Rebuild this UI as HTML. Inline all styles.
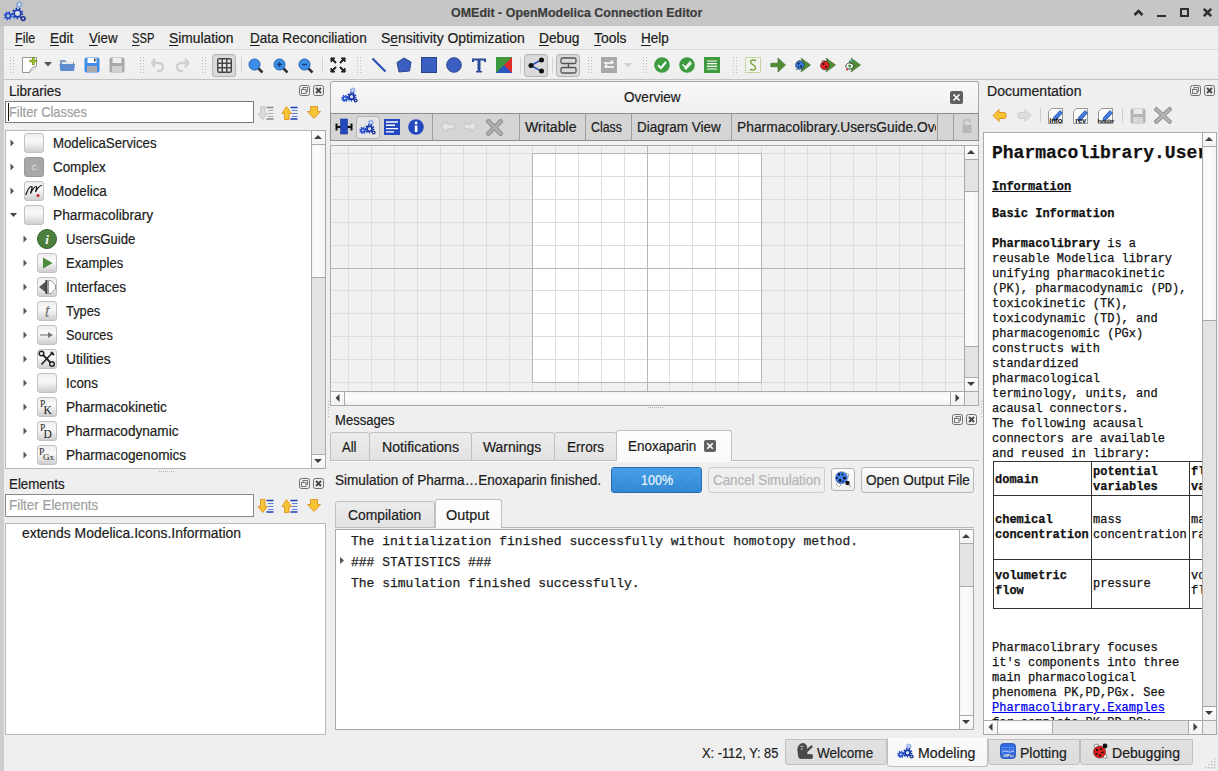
<!DOCTYPE html>
<html><head><meta charset="utf-8"><style>
*{margin:0;padding:0;box-sizing:border-box}
html,body{width:1219px;height:771px;overflow:hidden}
body{background:#efefef;font-family:"Liberation Sans",sans-serif;font-size:13.3px;color:#1c1c1c;position:relative}
.a{position:absolute}
.t{position:absolute;white-space:nowrap;-webkit-text-stroke:0.2px currentColor}
.m{font-family:"Liberation Mono",monospace;-webkit-text-stroke:0.25px currentColor}
.u{text-decoration:underline;text-underline-offset:2px}
</style></head><body>
<div class="a" style="left:0px;top:0px;width:1219px;height:26px;background:#c6c6c6"></div>
<div class="a" style="left:0px;top:26px;width:4px;height:745px;background:#cdcdcd"></div>
<div class="t " style="left:451.30px;top:3px;font-size:12.6px;line-height:20px;transform:scaleX(0.9895);transform-origin:0.00px 0;color:#3d3d3d;font-weight:bold;">OMEdit - OpenModelica Connection Editor</div>
<svg class="a" style="left:0px;top:0px;" width="32" height="26" viewBox="0 0 32 26"><g transform="scale(1)"><path d="M11 13 L17 17 L14 20 Z" fill="#8ab0e8"/><circle cx="19.2" cy="4.6" r="2.45" fill="#7a9ee6"/><circle cx="19.2" cy="4.6" r="2.79" fill="none" stroke="#7a9ee6" stroke-width="1.22" stroke-dasharray="1.09 1.09"/><circle cx="19.2" cy="4.6" r="1.3" fill="#c6c6c6"/><circle cx="19.2" cy="4.6" r="1.3" fill="#e4e8f4"/><circle cx="8.1" cy="15.8" r="3.24" fill="#2450d0"/><circle cx="8.1" cy="15.8" r="3.69" fill="none" stroke="#2450d0" stroke-width="1.62" stroke-dasharray="1.45 1.45"/><circle cx="8.1" cy="15.8" r="1.5" fill="#c6c6c6"/><circle cx="17.5" cy="13.4" r="4.18" fill="#1a3cb0"/><circle cx="17.5" cy="13.4" r="4.76" fill="none" stroke="#1a3cb0" stroke-width="2.09" stroke-dasharray="1.66 1.66"/><circle cx="17.5" cy="13.4" r="2.4" fill="#c6c6c6"/><circle cx="17.5" cy="13.4" r="2.40" fill="#d8dcec"/><circle cx="23.2" cy="18.6" r="1.9" fill="none" stroke="#1a2e90" stroke-width="1.50"/></g></svg>
<svg class="a" style="left:1133px;top:8px;" width="11" height="9" viewBox="0 0 11 9"><path d="M1.5 7 L5.5 3 L9.5 7" fill="none" stroke="#2e2e2e" stroke-width="2.6"/></svg>
<div class="a" style="left:1157px;top:15px;width:9px;height:2px;background:#2e2e2e"></div>
<div class="a" style="left:1180px;top:8px;width:9px;height:9px;border:2px solid #2e2e2e"></div>
<svg class="a" style="left:1202px;top:7px;" width="11" height="11" viewBox="0 0 11 11"><path d="M1.8 1.8 L9.2 9.2 M9.2 1.8 L1.8 9.2" stroke="#2e2e2e" stroke-width="2.5"/></svg>
<div class="t " style="left:15.30px;top:29px;font-size:13.8px;line-height:20px;transform:scaleX(0.9047);transform-origin:0.00px 0;"><span class="u">F</span>ile</div>
<div class="t " style="left:50.20px;top:29px;font-size:13.8px;line-height:20px;transform:scaleX(0.9746);transform-origin:0.00px 0;"><span class="u">E</span>dit</div>
<div class="t " style="left:88.70px;top:29px;font-size:13.8px;line-height:20px;transform:scaleX(0.9606);transform-origin:0.00px 0;"><span class="u">V</span>iew</div>
<div class="t " style="left:131.90px;top:29px;font-size:13.8px;line-height:20px;transform:scaleX(0.8116);transform-origin:0.00px 0;"><span class="u">S</span>SP</div>
<div class="t " style="left:169.30px;top:29px;font-size:13.8px;line-height:20px;transform:scaleX(1.0008);transform-origin:0.00px 0;"><span class="u">S</span>imulation</div>
<div class="t " style="left:249.70px;top:29px;font-size:13.8px;line-height:20px;transform:scaleX(0.9816);transform-origin:0.00px 0;"><span class="u">D</span>ata Reconciliation</div>
<div class="t " style="left:380.80px;top:29px;font-size:13.8px;line-height:20px;transform:scaleX(1.0076);transform-origin:0.00px 0;">S<span class="u">e</span>nsitivity Optimization</div>
<div class="t " style="left:538.90px;top:29px;font-size:13.8px;line-height:20px;transform:scaleX(0.9965);transform-origin:0.00px 0;"><span class="u">D</span>ebug</div>
<div class="t " style="left:593.80px;top:29px;font-size:13.8px;line-height:20px;transform:scaleX(1.0086);transform-origin:0.00px 0;"><span class="u">T</span>ools</div>
<div class="t " style="left:640.70px;top:29px;font-size:13.8px;line-height:20px;transform:scaleX(0.9803);transform-origin:0.00px 0;"><span class="u">H</span>elp</div>
<div class="a" style="left:4px;top:49px;width:1215px;height:1px;background:#dcdcdc"></div>
<div class="a" style="left:4px;top:50px;width:1215px;height:29px;background:linear-gradient(#f3f3f3,#eeeeee)"></div>
<div class="a" style="left:4px;top:79px;width:1215px;height:1px;background:#c2c2c2"></div>
<svg class="a" style="left:10px;top:57px;" width="4" height="16" viewBox="0 0 4 16"><rect x="0" y="0" width="1" height="1" fill="#bdbdbd"/><rect x="0" y="3" width="1" height="1" fill="#bdbdbd"/><rect x="0" y="6" width="1" height="1" fill="#bdbdbd"/><rect x="0" y="9" width="1" height="1" fill="#bdbdbd"/><rect x="0" y="12" width="1" height="1" fill="#bdbdbd"/><rect x="0" y="15" width="1" height="1" fill="#bdbdbd"/><rect x="3" y="0" width="1" height="1" fill="#bdbdbd"/><rect x="3" y="3" width="1" height="1" fill="#bdbdbd"/><rect x="3" y="6" width="1" height="1" fill="#bdbdbd"/><rect x="3" y="9" width="1" height="1" fill="#bdbdbd"/><rect x="3" y="12" width="1" height="1" fill="#bdbdbd"/><rect x="3" y="15" width="1" height="1" fill="#bdbdbd"/></svg>
<svg class="a" style="left:140px;top:57px;" width="4" height="16" viewBox="0 0 4 16"><rect x="0" y="0" width="1" height="1" fill="#bdbdbd"/><rect x="0" y="3" width="1" height="1" fill="#bdbdbd"/><rect x="0" y="6" width="1" height="1" fill="#bdbdbd"/><rect x="0" y="9" width="1" height="1" fill="#bdbdbd"/><rect x="0" y="12" width="1" height="1" fill="#bdbdbd"/><rect x="0" y="15" width="1" height="1" fill="#bdbdbd"/><rect x="3" y="0" width="1" height="1" fill="#bdbdbd"/><rect x="3" y="3" width="1" height="1" fill="#bdbdbd"/><rect x="3" y="6" width="1" height="1" fill="#bdbdbd"/><rect x="3" y="9" width="1" height="1" fill="#bdbdbd"/><rect x="3" y="12" width="1" height="1" fill="#bdbdbd"/><rect x="3" y="15" width="1" height="1" fill="#bdbdbd"/></svg>
<svg class="a" style="left:202px;top:57px;" width="4" height="16" viewBox="0 0 4 16"><rect x="0" y="0" width="1" height="1" fill="#bdbdbd"/><rect x="0" y="3" width="1" height="1" fill="#bdbdbd"/><rect x="0" y="6" width="1" height="1" fill="#bdbdbd"/><rect x="0" y="9" width="1" height="1" fill="#bdbdbd"/><rect x="0" y="12" width="1" height="1" fill="#bdbdbd"/><rect x="0" y="15" width="1" height="1" fill="#bdbdbd"/><rect x="3" y="0" width="1" height="1" fill="#bdbdbd"/><rect x="3" y="3" width="1" height="1" fill="#bdbdbd"/><rect x="3" y="6" width="1" height="1" fill="#bdbdbd"/><rect x="3" y="9" width="1" height="1" fill="#bdbdbd"/><rect x="3" y="12" width="1" height="1" fill="#bdbdbd"/><rect x="3" y="15" width="1" height="1" fill="#bdbdbd"/></svg>
<svg class="a" style="left:357px;top:57px;" width="4" height="16" viewBox="0 0 4 16"><rect x="0" y="0" width="1" height="1" fill="#bdbdbd"/><rect x="0" y="3" width="1" height="1" fill="#bdbdbd"/><rect x="0" y="6" width="1" height="1" fill="#bdbdbd"/><rect x="0" y="9" width="1" height="1" fill="#bdbdbd"/><rect x="0" y="12" width="1" height="1" fill="#bdbdbd"/><rect x="0" y="15" width="1" height="1" fill="#bdbdbd"/><rect x="3" y="0" width="1" height="1" fill="#bdbdbd"/><rect x="3" y="3" width="1" height="1" fill="#bdbdbd"/><rect x="3" y="6" width="1" height="1" fill="#bdbdbd"/><rect x="3" y="9" width="1" height="1" fill="#bdbdbd"/><rect x="3" y="12" width="1" height="1" fill="#bdbdbd"/><rect x="3" y="15" width="1" height="1" fill="#bdbdbd"/></svg>
<svg class="a" style="left:588px;top:57px;" width="4" height="16" viewBox="0 0 4 16"><rect x="0" y="0" width="1" height="1" fill="#bdbdbd"/><rect x="0" y="3" width="1" height="1" fill="#bdbdbd"/><rect x="0" y="6" width="1" height="1" fill="#bdbdbd"/><rect x="0" y="9" width="1" height="1" fill="#bdbdbd"/><rect x="0" y="12" width="1" height="1" fill="#bdbdbd"/><rect x="0" y="15" width="1" height="1" fill="#bdbdbd"/><rect x="3" y="0" width="1" height="1" fill="#bdbdbd"/><rect x="3" y="3" width="1" height="1" fill="#bdbdbd"/><rect x="3" y="6" width="1" height="1" fill="#bdbdbd"/><rect x="3" y="9" width="1" height="1" fill="#bdbdbd"/><rect x="3" y="12" width="1" height="1" fill="#bdbdbd"/><rect x="3" y="15" width="1" height="1" fill="#bdbdbd"/></svg>
<svg class="a" style="left:643px;top:57px;" width="4" height="16" viewBox="0 0 4 16"><rect x="0" y="0" width="1" height="1" fill="#bdbdbd"/><rect x="0" y="3" width="1" height="1" fill="#bdbdbd"/><rect x="0" y="6" width="1" height="1" fill="#bdbdbd"/><rect x="0" y="9" width="1" height="1" fill="#bdbdbd"/><rect x="0" y="12" width="1" height="1" fill="#bdbdbd"/><rect x="0" y="15" width="1" height="1" fill="#bdbdbd"/><rect x="3" y="0" width="1" height="1" fill="#bdbdbd"/><rect x="3" y="3" width="1" height="1" fill="#bdbdbd"/><rect x="3" y="6" width="1" height="1" fill="#bdbdbd"/><rect x="3" y="9" width="1" height="1" fill="#bdbdbd"/><rect x="3" y="12" width="1" height="1" fill="#bdbdbd"/><rect x="3" y="15" width="1" height="1" fill="#bdbdbd"/></svg>
<svg class="a" style="left:733px;top:57px;" width="4" height="16" viewBox="0 0 4 16"><rect x="0" y="0" width="1" height="1" fill="#bdbdbd"/><rect x="0" y="3" width="1" height="1" fill="#bdbdbd"/><rect x="0" y="6" width="1" height="1" fill="#bdbdbd"/><rect x="0" y="9" width="1" height="1" fill="#bdbdbd"/><rect x="0" y="12" width="1" height="1" fill="#bdbdbd"/><rect x="0" y="15" width="1" height="1" fill="#bdbdbd"/><rect x="3" y="0" width="1" height="1" fill="#bdbdbd"/><rect x="3" y="3" width="1" height="1" fill="#bdbdbd"/><rect x="3" y="6" width="1" height="1" fill="#bdbdbd"/><rect x="3" y="9" width="1" height="1" fill="#bdbdbd"/><rect x="3" y="12" width="1" height="1" fill="#bdbdbd"/><rect x="3" y="15" width="1" height="1" fill="#bdbdbd"/></svg>
<div class="a" style="left:241px;top:57px;width:1px;height:16px;background:#d2d2d2"></div>
<div class="a" style="left:322px;top:57px;width:1px;height:16px;background:#d2d2d2"></div>
<div class="a" style="left:520px;top:57px;width:1px;height:16px;background:#d2d2d2"></div>
<div class="a" style="left:552px;top:57px;width:1px;height:16px;background:#d2d2d2"></div>
<svg class="a" style="left:21px;top:56px;" width="20" height="20" viewBox="0 0 20 20"><path d="M1.5 1.5 H15.5 V10 L8.5 16.5 H1.5 Z" fill="#fff" stroke="#8a8a8a" stroke-width="0.9"/><path d="M8.5 16.5 C9.5 13 10.5 11.5 15.5 10" fill="#e8e8e8" stroke="#8a8a8a" stroke-width="0.9"/><path d="M8.5 5 H16 M12.25 1 V9" stroke="#7a9a20" stroke-width="2.6"/><path d="M9.5 5 H15 M12.25 2 V8" stroke="#9aca3a" stroke-width="1"/></svg>
<svg class="a" style="left:44px;top:62px;" width="8" height="5" viewBox="0 0 8 5"><path d="M0 0 H8 L4 4.5 Z" fill="#555"/></svg>
<svg class="a" style="left:59px;top:57px;" width="17" height="15" viewBox="0 0 17 15"><path d="M1 3 H6 L8 5 H15 V13 H1 Z" fill="#7a9cc8"/><path d="M3 5 H14 V8 H3Z" fill="#e8e8e8"/><path d="M0.5 7 H16 L15 14 H1.5 Z" fill="#5e8ad0"/></svg>
<svg class="a" style="left:84px;top:57px;" width="16" height="16" viewBox="0 0 16 16"><rect x="0.5" y="0.5" width="15" height="15" rx="2" fill="#3d8ee8"/><rect x="3.5" y="1" width="9" height="5" fill="#fff"/><rect x="3" y="9" width="10" height="6" fill="#aaa"/><rect x="10" y="1.5" width="1.5" height="3" fill="#333"/></svg>
<svg class="a" style="left:109px;top:57px;" width="16" height="16" viewBox="0 0 16 16"><rect x="0.5" y="0.5" width="15" height="15" rx="2" fill="#a9a9a9"/><rect x="3.5" y="1" width="9" height="5" fill="#eee"/><rect x="3" y="9" width="10" height="6" fill="#d0d0d0"/></svg>
<svg class="a" style="left:151px;top:58px;" width="13" height="14" viewBox="0 0 13 14"><path d="M4 1 L0.5 5 L4 9 M1 5 H8 A4 4 0 0 1 8 13 H6" fill="none" stroke="#d0d0d0" stroke-width="2.5"/></svg>
<svg class="a" style="left:176px;top:58px;" width="13" height="14" viewBox="0 0 13 14"><path d="M9 1 L12.5 5 L9 9 M12 5 H5 A4 4 0 0 0 5 13 H7" fill="none" stroke="#d0d0d0" stroke-width="2.5"/></svg>
<div class="a" style="left:212px;top:54px;width:24px;height:23px;background:#dadada;border:1px solid #b4b4b4;border-radius:3px"></div>
<svg class="a" style="left:215.5px;top:57px;" width="17" height="17" viewBox="0 0 17 17"><rect x="1" y="1" width="15" height="15" rx="2" fill="#454545"/><rect x="2.5" y="2.5" width="3" height="3" fill="#e6e6e6"/><rect x="2.5" y="7.0" width="3" height="3" fill="#e6e6e6"/><rect x="2.5" y="11.5" width="3" height="3" fill="#e6e6e6"/><rect x="7.0" y="2.5" width="3" height="3" fill="#e6e6e6"/><rect x="7.0" y="7.0" width="3" height="3" fill="#e6e6e6"/><rect x="7.0" y="11.5" width="3" height="3" fill="#e6e6e6"/><rect x="11.5" y="2.5" width="3" height="3" fill="#e6e6e6"/><rect x="11.5" y="7.0" width="3" height="3" fill="#e6e6e6"/><rect x="11.5" y="11.5" width="3" height="3" fill="#e6e6e6"/></svg>
<svg class="a" style="left:248px;top:58px;" width="16" height="16" viewBox="0 0 16 16"><line x1="9" y1="9" x2="14.5" y2="14.5" stroke="#333" stroke-width="2.5"/><circle cx="6.5" cy="6.5" r="5.5" fill="#3d8ee8" stroke="#1f5fb0" stroke-width="1"/></svg>
<svg class="a" style="left:273px;top:58px;" width="16" height="16" viewBox="0 0 16 16"><line x1="9" y1="9" x2="14.5" y2="14.5" stroke="#333" stroke-width="2.5"/><circle cx="6.5" cy="6.5" r="5.5" fill="#3d8ee8" stroke="#1f5fb0" stroke-width="1"/><path d="M4 6.5H9 M6.5 4V9" stroke="#1a3f80" stroke-width="1.5"/></svg>
<svg class="a" style="left:298px;top:58px;" width="16" height="16" viewBox="0 0 16 16"><line x1="9" y1="9" x2="14.5" y2="14.5" stroke="#333" stroke-width="2.5"/><circle cx="6.5" cy="6.5" r="5.5" fill="#3d8ee8" stroke="#1f5fb0" stroke-width="1"/><path d="M4 6.5H9" stroke="#1a3f80" stroke-width="1.5"/></svg>
<svg class="a" style="left:330px;top:57px;" width="16" height="16" viewBox="0 0 16 16"><path d="M1 1 L6 6 M15 1 L10 6 M1 15 L6 10 M15 15 L10 10" stroke="#222" stroke-width="2"/><path d="M1 1 H5 L1 5Z M15 1 H11 L15 5Z M1 15 H5 L1 11Z M15 15 H11 L15 11Z" fill="#222" stroke="#222"/></svg>
<svg class="a" style="left:371px;top:57px;" width="16" height="16" viewBox="0 0 16 16"><path d="M1.5 1.5 L14.5 14.5" stroke="#2b54b8" stroke-width="2.2"/></svg>
<svg class="a" style="left:396px;top:57px;" width="16" height="16" viewBox="0 0 16 16"><path d="M8 1 L15 5 L13.5 14 L3 15 L1 5.5 Z" fill="#3a5fc0" stroke="#2a4590"/></svg>
<svg class="a" style="left:421px;top:57px;" width="16" height="16" viewBox="0 0 16 16"><rect x="0.5" y="0.5" width="15" height="15" fill="#3a5fc0" stroke="#2a4590"/></svg>
<svg class="a" style="left:446px;top:57px;" width="16" height="16" viewBox="0 0 16 16"><circle cx="8" cy="8" r="7.3" fill="#3a5fc0" stroke="#2a4590"/></svg>
<svg class="a" style="left:471px;top:57px;" width="16" height="16" viewBox="0 0 16 16"><path d="M1 1.5 H15 V5 H13 V3.5 H9.5 V14 H11 V15.5 H5 V14 H6.5 V3.5 H3 V5 H1 Z" fill="#2a4a9a"/></svg>
<svg class="a" style="left:496px;top:57px;" width="16" height="16" viewBox="0 0 16 16"><rect x="0" y="0" width="16" height="16" fill="#2a55c0"/><path d="M0 0 H16 V16Z" fill="#e02a2a"/><path d="M0 10 L10 0 H16 L16 0 L0 16Z" fill="#3c9a3c"/><path d="M0 0 L0 10 L10 0Z" fill="#3c9a3c"/></svg>
<div class="a" style="left:524px;top:54px;width:24px;height:23px;background:#dadada;border:1px solid #b4b4b4;border-radius:3px"></div>
<svg class="a" style="left:528px;top:57px;" width="17" height="17" viewBox="0 0 17 17"><path d="M3 8.5 L13 3 M3 8.5 L13 14" stroke="#2b54b8" stroke-width="1.5"/><circle cx="3" cy="8.5" r="2.5" fill="#111"/><circle cx="13.5" cy="3" r="2.5" fill="#111"/><circle cx="13.5" cy="14" r="2.5" fill="#111"/></svg>
<div class="a" style="left:556px;top:54px;width:24px;height:23px;background:#dadada;border:1px solid #b4b4b4;border-radius:3px"></div>
<svg class="a" style="left:559px;top:56px;" width="19" height="19" viewBox="0 0 19 19"><rect x="2" y="2" width="15" height="5.5" rx="1.5" fill="none" stroke="#555" stroke-width="1.3"/><rect x="2" y="11.5" width="15" height="5.5" rx="1.5" fill="none" stroke="#555" stroke-width="1.3"/><path d="M9.5 7.5 V11.5" stroke="#555" stroke-width="1.3"/></svg>
<svg class="a" style="left:601px;top:57px;" width="16" height="16" viewBox="0 0 16 16"><rect x="0" y="0" width="16" height="16" fill="#a9a9a9"/><path d="M3 6 H12 M10 3.5 L12.5 6 M13 10 H4 M6 7.5 L3.5 10" stroke="#fff" stroke-width="1.6" fill="none"/></svg>
<svg class="a" style="left:624px;top:63px;" width="8" height="5" viewBox="0 0 8 5"><path d="M0 0 H8 L4 4.5 Z" fill="#cfcfcf"/></svg>
<svg class="a" style="left:654px;top:57px;" width="16" height="16" viewBox="0 0 16 16"><circle cx="8" cy="8" r="7.8" fill="#3f9b3f"/><path d="M4 8.3 L7 11 L12 5" stroke="#fff" stroke-width="2" fill="none"/></svg>
<svg class="a" style="left:679px;top:57px;" width="16" height="16" viewBox="0 0 16 16"><circle cx="8" cy="8" r="7.8" fill="#3f9b3f"/><path d="M3.5 7.5 L6.5 10.3 L11.5 4.5 M5.5 10.5 L7 12 L12.5 6" stroke="#fff" stroke-width="1.4" fill="none"/></svg>
<svg class="a" style="left:704px;top:57px;" width="16" height="16" viewBox="0 0 16 16"><rect x="0" y="0" width="16" height="16" fill="#3f9b3f"/><path d="M3 4 H13 M3 6.7 H13 M3 9.3 H13 M3 12 H13" stroke="#fff" stroke-width="1.2"/></svg>
<svg class="a" style="left:745px;top:57px;" width="16" height="16" viewBox="0 0 16 16"><rect x="0.5" y="0.5" width="15" height="15" fill="#f2f2ee" stroke="#a8c070" stroke-dasharray="1 0.6"/><path d="M11 4 C10 2.5 5.5 2.5 5.5 5 C5.5 8 10.5 7.5 10.5 11 C10.5 13.5 6 13.5 5 12" fill="none" stroke="#7aaa3a" stroke-width="1.4"/></svg>
<svg class="a" style="left:770px;top:57px;" width="16" height="16" viewBox="0 0 16 16"><path d="M0.8 6.2 H8 V1 L15.5 8 L8 15 V9.8 H0.8 Z" fill="#4f8c34" stroke="#3a6a22" stroke-width="0.6" stroke-linejoin="round"/></svg>
<svg class="a" style="left:795px;top:57px;" width="16" height="16" viewBox="0 0 16 16"><path d="M6 1 L15.5 8 L6 15 L8.5 8 Z" fill="#4f8c34" stroke="#3a6a22" stroke-width="0.6" stroke-linejoin="round"/><path d="M4 3 L12 8 L4 13Z" fill="#4f8c34"/><circle cx="4.8" cy="8" r="4.3" fill="#3a78e0" stroke="#123" stroke-width="0.5"/><circle cx="3.5" cy="6.5" r="0.9" fill="#111"/><circle cx="6" cy="9.5" r="0.9" fill="#111"/><circle cx="3.5" cy="10" r="0.7" fill="#111"/><path d="M1 13 L3 11.5 M8 13 L6.5 11.5" stroke="#333" stroke-width="0.7"/></svg>
<svg class="a" style="left:820px;top:57px;" width="16" height="16" viewBox="0 0 16 16"><path d="M6 1 L15.5 8 L6 15 L8.5 8 Z" fill="#4f8c34" stroke="#3a6a22" stroke-width="0.6" stroke-linejoin="round"/><path d="M4 3 L12 8 L4 13Z" fill="#4f8c34"/><circle cx="4.8" cy="8.5" r="4.3" fill="#e02424" stroke="#311" stroke-width="0.5"/><circle cx="3.5" cy="7" r="0.9" fill="#111"/><circle cx="6" cy="10" r="0.9" fill="#111"/><path d="M2 3 L4 4.5 M8 2.5 L6.5 4.5" stroke="#333" stroke-width="0.7"/></svg>
<svg class="a" style="left:845px;top:57px;" width="16" height="16" viewBox="0 0 16 16"><path d="M6 1 L15.5 8 L6 15 L8.5 8 Z" fill="#4f8c34" stroke="#3a6a22" stroke-width="0.6" stroke-linejoin="round"/><path d="M4 3 L12 8 L4 13Z" fill="#4f8c34"/><path d="M0.5 9 C2 5 7 5 9 9 C7 13 2 13 0.5 9Z" fill="#fff" stroke="#222" stroke-width="0.8"/><circle cx="4.8" cy="9" r="1.6" fill="#3a9a40"/><circle cx="2" cy="12.5" r="1" fill="#e02020"/><circle cx="6.5" cy="3.5" r="1" fill="#40a0e0"/></svg>
<div class="t " style="left:9.20px;top:82px;font-size:13.8px;line-height:20px;transform:scaleX(0.9844);transform-origin:0.00px 0;">Libraries</div>
<svg class="a" style="left:299px;top:85px;" width="11" height="11" viewBox="0 0 11 11"><rect x="0.5" y="0.5" width="10" height="10" rx="2" fill="none" stroke="#6e6e6e"/><rect x="4" y="2.5" width="4.5" height="4" fill="none" stroke="#6e6e6e" stroke-width="0.9"/><rect x="2.5" y="4.5" width="4.5" height="4" fill="#efefef" stroke="#6e6e6e" stroke-width="0.9"/></svg>
<svg class="a" style="left:313px;top:85px;" width="11" height="11" viewBox="0 0 11 11"><rect x="0.5" y="0.5" width="10" height="10" rx="2" fill="none" stroke="#6e6e6e"/><path d="M3 3 L8 8 M8 3 L3 8" stroke="#444" stroke-width="1.8"/></svg>
<div class="a" style="left:5px;top:101px;width:249px;height:22px;background:#fff;border:1px solid #7c7c7c"></div>
<div class="t " style="left:8.90px;top:103px;font-size:13.8px;line-height:20px;transform:scaleX(0.9323);transform-origin:0.00px 0;color:#a0a0a0;">Filter Classes</div>
<div class="a" style="left:8px;top:103px;width:1px;height:18px;background:#111"></div>
<svg class="a" style="left:257px;top:104.5px;" width="18" height="16" viewBox="0 0 18 16"><path d="M3.5 1.5 H8 V8.5 H10.5 L5.75 14.5 L1 8.5 H3.5 Z" fill="#dadada" stroke="#c4c4c4" stroke-width="0.8"/><path d="M9.5 2.5 H16.5 M9.5 14 H16.5" stroke="#888888" stroke-width="1.6"/><path d="M11 5.5 H16.5 M11 8.5 H16.5 M11 11.5 H16.5" stroke="#b0b0b0" stroke-width="1.2"/></svg>
<svg class="a" style="left:281px;top:104.5px;" width="18" height="16" viewBox="0 0 18 16"><path d="M5.5 1.5 L10.5 8.5 H8 V14.5 H3.5 V8.5 H1 Z" fill="#f7c436" stroke="#dc8a14" stroke-width="0.8"/><path d="M9.5 2.5 H16.5 M9.5 14 H16.5" stroke="#1a40b0" stroke-width="1.6"/><path d="M11 5.5 H16.5 M11 8.5 H16.5 M11 11.5 H16.5" stroke="#5a80d8" stroke-width="1.2"/></svg>
<svg class="a" style="left:306px;top:104.5px;" width="16" height="16" viewBox="0 0 16 16"><path d="M4.5 1.5 H11.5 V6.5 H14.5 L8 13.5 L1.5 6.5 H4.5 Z" fill="#f7c436" stroke="#dc8a14" stroke-width="0.8"/></svg>
<div class="a" style="left:5px;top:130px;width:321px;height:339px;background:#fff;border:1px solid #b9b9b9"></div>
<div class="a" style="left:311px;top:130px;width:15px;height:339px;background:#e3e3e3;border:1px solid #a9a9a9"></div>
<div class="a" style="left:311px;top:144px;width:15px;height:134px;background:linear-gradient(90deg,#f6f6f6,#fdfdfd 45%,#f3f3f3);border:1px solid #a9a9a9"></div>
<div class="a" style="left:311px;top:130px;width:15px;height:15px;background:linear-gradient(#fefefe,#f3f3f3);border:1px solid #a9a9a9"></div>
<svg class="a" style="left:314px;top:135px;" width="8" height="4" viewBox="0 0 8 4"><path d="M0 4 L4 0 L8 4 Z" fill="#3f3f3f"/></svg>
<div class="a" style="left:311px;top:454px;width:15px;height:15px;background:linear-gradient(#fefefe,#f3f3f3);border:1px solid #a9a9a9"></div>
<svg class="a" style="left:314px;top:459px;" width="8" height="4" viewBox="0 0 8 4"><path d="M0 0 L4 4 L8 0 Z" fill="#3f3f3f"/></svg>
<svg class="a" style="left:10px;top:139px;" width="5" height="8" viewBox="0 0 5 8"><path d="M0.5 0.5 V7.5 L4 4 Z" fill="#555"/></svg>
<svg class="a" style="left:24px;top:133px;" width="20" height="20" viewBox="0 0 20 20"><defs><linearGradient id="gb" x1="0" y1="0" x2="0" y2="1"><stop offset="0" stop-color="#ececec"/><stop offset="0.4" stop-color="#fafafa"/><stop offset="1" stop-color="#cdcdcd"/></linearGradient></defs><rect x="0.5" y="0.5" width="19" height="19" rx="2.5" fill="url(#gb)" stroke="#c2c2c2"/></svg>
<div class="t " style="left:52.60px;top:134px;font-size:13.8px;line-height:20px;transform:scaleX(0.9572);transform-origin:0.00px 0;">ModelicaServices</div>
<svg class="a" style="left:10px;top:163px;" width="5" height="8" viewBox="0 0 5 8"><path d="M0.5 0.5 V7.5 L4 4 Z" fill="#555"/></svg>
<svg class="a" style="left:24px;top:157px;" width="20" height="20" viewBox="0 0 20 20"><defs><linearGradient id="gb" x1="0" y1="0" x2="0" y2="1"><stop offset="0" stop-color="#ececec"/><stop offset="0.4" stop-color="#fafafa"/><stop offset="1" stop-color="#cdcdcd"/></linearGradient></defs><rect x="0.5" y="0.5" width="19" height="19" rx="2.5" fill="#a8a8a8" stroke="#9a9a9a"/><text x="10" y="13" font-size="7" fill="#eee" text-anchor="middle" font-family="Liberation Sans">C</text></svg>
<div class="t " style="left:52.60px;top:158px;font-size:13.8px;line-height:20px;transform:scaleX(0.9699);transform-origin:0.00px 0;">Complex</div>
<svg class="a" style="left:10px;top:187px;" width="5" height="8" viewBox="0 0 5 8"><path d="M0.5 0.5 V7.5 L4 4 Z" fill="#555"/></svg>
<svg class="a" style="left:24px;top:181px;" width="20" height="20" viewBox="0 0 20 20"><defs><linearGradient id="gb" x1="0" y1="0" x2="0" y2="1"><stop offset="0" stop-color="#ececec"/><stop offset="0.4" stop-color="#fafafa"/><stop offset="1" stop-color="#cdcdcd"/></linearGradient></defs><rect x="0.5" y="0.5" width="19" height="19" rx="2.5" fill="url(#gb)" stroke="#c2c2c2"/><path d="M2 13.5 C3.5 9 5.5 5.5 7.5 5.5 C9 5.5 7 10 6.5 12.5 C8.5 8.5 10.5 5.5 12 5.5 C13.5 5.5 12 9 11.5 11 C13 8 15 5 17.5 4.5" fill="none" stroke="#111" stroke-width="1.2" stroke-linecap="round"/><circle cx="14" cy="14.5" r="1.5" fill="#d02020"/></svg>
<div class="t " style="left:52.60px;top:182px;font-size:13.8px;line-height:20px;transform:scaleX(0.9752);transform-origin:0.00px 0;">Modelica</div>
<svg class="a" style="left:10px;top:213px;" width="8" height="5" viewBox="0 0 8 5"><path d="M0 0 H7 L3.5 4 Z" fill="#444"/></svg>
<svg class="a" style="left:24px;top:205px;" width="20" height="20" viewBox="0 0 20 20"><defs><linearGradient id="gb" x1="0" y1="0" x2="0" y2="1"><stop offset="0" stop-color="#ececec"/><stop offset="0.4" stop-color="#fafafa"/><stop offset="1" stop-color="#cdcdcd"/></linearGradient></defs><rect x="0.5" y="0.5" width="19" height="19" rx="2.5" fill="url(#gb)" stroke="#c2c2c2"/></svg>
<div class="t " style="left:52.60px;top:206px;font-size:13.8px;line-height:20px;transform:scaleX(0.9974);transform-origin:0.00px 0;">Pharmacolibrary</div>
<svg class="a" style="left:23px;top:235px;" width="5" height="8" viewBox="0 0 5 8"><path d="M0.5 0.5 V7.5 L4 4 Z" fill="#555"/></svg>
<svg class="a" style="left:37px;top:229px;" width="20" height="20" viewBox="0 0 20 20"><defs><linearGradient id="gb" x1="0" y1="0" x2="0" y2="1"><stop offset="0" stop-color="#ececec"/><stop offset="0.4" stop-color="#fafafa"/><stop offset="1" stop-color="#cdcdcd"/></linearGradient></defs><circle cx="10" cy="10" r="9.5" fill="#4a7f3c" stroke="#2f5e28"/><text x="10" y="15" font-size="13" fill="#fff" text-anchor="middle" font-family="Liberation Serif" font-style="italic" font-weight="bold">i</text></svg>
<div class="t " style="left:65.80px;top:230px;font-size:13.8px;line-height:20px;transform:scaleX(0.9525);transform-origin:0.00px 0;">UsersGuide</div>
<svg class="a" style="left:23px;top:259px;" width="5" height="8" viewBox="0 0 5 8"><path d="M0.5 0.5 V7.5 L4 4 Z" fill="#555"/></svg>
<svg class="a" style="left:37px;top:253px;" width="20" height="20" viewBox="0 0 20 20"><defs><linearGradient id="gb" x1="0" y1="0" x2="0" y2="1"><stop offset="0" stop-color="#ececec"/><stop offset="0.4" stop-color="#fafafa"/><stop offset="1" stop-color="#cdcdcd"/></linearGradient></defs><rect x="0.5" y="0.5" width="19" height="19" rx="2.5" fill="url(#gb)" stroke="#c2c2c2"/><path d="M6 4.5 L15.5 10 L6 15.5 Z" fill="#4a8a3a"/></svg>
<div class="t " style="left:65.80px;top:254px;font-size:13.8px;line-height:20px;transform:scaleX(0.9442);transform-origin:0.00px 0;">Examples</div>
<svg class="a" style="left:23px;top:283px;" width="5" height="8" viewBox="0 0 5 8"><path d="M0.5 0.5 V7.5 L4 4 Z" fill="#555"/></svg>
<svg class="a" style="left:37px;top:277px;" width="20" height="20" viewBox="0 0 20 20"><defs><linearGradient id="gb" x1="0" y1="0" x2="0" y2="1"><stop offset="0" stop-color="#ececec"/><stop offset="0.4" stop-color="#fafafa"/><stop offset="1" stop-color="#cdcdcd"/></linearGradient></defs><rect x="0.5" y="0.5" width="19" height="19" rx="2.5" fill="url(#gb)" stroke="#c2c2c2"/><path d="M2 10 L9.5 4 V16 Z" fill="#555"/><rect x="8.5" y="3" width="2" height="14" fill="#444"/><path d="M11.5 3.5 H14 L18.5 8 V12 L14 16.5 H11.5 Z" fill="#fff" stroke="#8a8a8a" stroke-width="0.9"/></svg>
<div class="t " style="left:65.80px;top:278px;font-size:13.8px;line-height:20px;transform:scaleX(0.9920);transform-origin:0.00px 0;">Interfaces</div>
<svg class="a" style="left:23px;top:307px;" width="5" height="8" viewBox="0 0 5 8"><path d="M0.5 0.5 V7.5 L4 4 Z" fill="#555"/></svg>
<svg class="a" style="left:37px;top:301px;" width="20" height="20" viewBox="0 0 20 20"><defs><linearGradient id="gb" x1="0" y1="0" x2="0" y2="1"><stop offset="0" stop-color="#ececec"/><stop offset="0.4" stop-color="#fafafa"/><stop offset="1" stop-color="#cdcdcd"/></linearGradient></defs><rect x="0.5" y="0.5" width="19" height="19" rx="2.5" fill="url(#gb)" stroke="#c2c2c2"/><text x="10" y="16" font-size="17" fill="#7a7a7a" text-anchor="middle" font-family="Liberation Sans" font-style="italic">t</text></svg>
<div class="t " style="left:65.80px;top:302px;font-size:13.8px;line-height:20px;transform:scaleX(0.9309);transform-origin:0.00px 0;">Types</div>
<svg class="a" style="left:23px;top:331px;" width="5" height="8" viewBox="0 0 5 8"><path d="M0.5 0.5 V7.5 L4 4 Z" fill="#555"/></svg>
<svg class="a" style="left:37px;top:325px;" width="20" height="20" viewBox="0 0 20 20"><defs><linearGradient id="gb" x1="0" y1="0" x2="0" y2="1"><stop offset="0" stop-color="#ececec"/><stop offset="0.4" stop-color="#fafafa"/><stop offset="1" stop-color="#cdcdcd"/></linearGradient></defs><rect x="0.5" y="0.5" width="19" height="19" rx="2.5" fill="url(#gb)" stroke="#c2c2c2"/><path d="M3 10 H12" stroke="#8a8a8a" stroke-width="1.3"/><path d="M11 7 L16 10 L11 13Z" fill="#777"/></svg>
<div class="t " style="left:65.80px;top:326px;font-size:13.8px;line-height:20px;transform:scaleX(0.9260);transform-origin:0.00px 0;">Sources</div>
<svg class="a" style="left:23px;top:355px;" width="5" height="8" viewBox="0 0 5 8"><path d="M0.5 0.5 V7.5 L4 4 Z" fill="#555"/></svg>
<svg class="a" style="left:37px;top:349px;" width="20" height="20" viewBox="0 0 20 20"><defs><linearGradient id="gb" x1="0" y1="0" x2="0" y2="1"><stop offset="0" stop-color="#ececec"/><stop offset="0.4" stop-color="#fafafa"/><stop offset="1" stop-color="#cdcdcd"/></linearGradient></defs><rect x="0.5" y="0.5" width="19" height="19" rx="2.5" fill="url(#gb)" stroke="#c2c2c2"/><path d="M15.5 3.5 L4.5 15.5" stroke="#222" stroke-width="1.6"/><path d="M14 3 L17 6" stroke="#222" stroke-width="2"/><path d="M5.5 5.5 L13.5 13.5" stroke="#222" stroke-width="1.8"/><circle cx="4.5" cy="4.5" r="2.3" fill="none" stroke="#222" stroke-width="1.4"/><circle cx="15" cy="15" r="2.3" fill="none" stroke="#222" stroke-width="1.4"/></svg>
<div class="t " style="left:65.80px;top:350px;font-size:13.8px;line-height:20px;transform:scaleX(1.0044);transform-origin:0.00px 0;">Utilities</div>
<svg class="a" style="left:23px;top:379px;" width="5" height="8" viewBox="0 0 5 8"><path d="M0.5 0.5 V7.5 L4 4 Z" fill="#555"/></svg>
<svg class="a" style="left:37px;top:373px;" width="20" height="20" viewBox="0 0 20 20"><defs><linearGradient id="gb" x1="0" y1="0" x2="0" y2="1"><stop offset="0" stop-color="#ececec"/><stop offset="0.4" stop-color="#fafafa"/><stop offset="1" stop-color="#cdcdcd"/></linearGradient></defs><rect x="0.5" y="0.5" width="19" height="19" rx="2.5" fill="url(#gb)" stroke="#c2c2c2"/></svg>
<div class="t " style="left:65.80px;top:374px;font-size:13.8px;line-height:20px;transform:scaleX(0.9672);transform-origin:0.00px 0;">Icons</div>
<svg class="a" style="left:23px;top:403px;" width="5" height="8" viewBox="0 0 5 8"><path d="M0.5 0.5 V7.5 L4 4 Z" fill="#555"/></svg>
<svg class="a" style="left:37px;top:397px;" width="20" height="20" viewBox="0 0 20 20"><defs><linearGradient id="gb" x1="0" y1="0" x2="0" y2="1"><stop offset="0" stop-color="#ececec"/><stop offset="0.4" stop-color="#fafafa"/><stop offset="1" stop-color="#cdcdcd"/></linearGradient></defs><rect x="0.5" y="0.5" width="19" height="19" rx="2.5" fill="url(#gb)" stroke="#c2c2c2"/><text x="3" y="9.5" font-size="9.5" fill="#222" font-family="Liberation Serif">P</text><text x="6.5" y="17" font-size="11.5" fill="#222" font-family="Liberation Serif">K</text></svg>
<div class="t " style="left:65.80px;top:398px;font-size:13.8px;line-height:20px;transform:scaleX(0.9884);transform-origin:0.00px 0;">Pharmacokinetic</div>
<svg class="a" style="left:23px;top:427px;" width="5" height="8" viewBox="0 0 5 8"><path d="M0.5 0.5 V7.5 L4 4 Z" fill="#555"/></svg>
<svg class="a" style="left:37px;top:421px;" width="20" height="20" viewBox="0 0 20 20"><defs><linearGradient id="gb" x1="0" y1="0" x2="0" y2="1"><stop offset="0" stop-color="#ececec"/><stop offset="0.4" stop-color="#fafafa"/><stop offset="1" stop-color="#cdcdcd"/></linearGradient></defs><rect x="0.5" y="0.5" width="19" height="19" rx="2.5" fill="url(#gb)" stroke="#c2c2c2"/><text x="3" y="9.5" font-size="9.5" fill="#222" font-family="Liberation Serif">P</text><text x="6.5" y="17" font-size="11.5" fill="#222" font-family="Liberation Serif">D</text></svg>
<div class="t " style="left:65.80px;top:422px;font-size:13.8px;line-height:20px;transform:scaleX(0.9846);transform-origin:0.00px 0;">Pharmacodynamic</div>
<svg class="a" style="left:23px;top:451px;" width="5" height="8" viewBox="0 0 5 8"><path d="M0.5 0.5 V7.5 L4 4 Z" fill="#555"/></svg>
<svg class="a" style="left:37px;top:445px;" width="20" height="20" viewBox="0 0 20 20"><defs><linearGradient id="gb" x1="0" y1="0" x2="0" y2="1"><stop offset="0" stop-color="#ececec"/><stop offset="0.4" stop-color="#fafafa"/><stop offset="1" stop-color="#cdcdcd"/></linearGradient></defs><rect x="0.5" y="0.5" width="19" height="19" rx="2.5" fill="url(#gb)" stroke="#c2c2c2"/><text x="2" y="9.5" font-size="9.5" fill="#222" font-family="Liberation Serif">P</text><text x="6" y="14.5" font-size="9" fill="#222" font-family="Liberation Serif">Gx</text></svg>
<div class="t " style="left:65.80px;top:446px;font-size:13.8px;line-height:20px;transform:scaleX(0.9853);transform-origin:0.00px 0;">Pharmacogenomics</div>
<svg class="a" style="left:159px;top:471px;" width="16" height="1" viewBox="0 0 16 1"><rect x="0" y="0" width="1" height="1" fill="#b8b8b8"/><rect x="2" y="0" width="1" height="1" fill="#b8b8b8"/><rect x="4" y="0" width="1" height="1" fill="#b8b8b8"/><rect x="6" y="0" width="1" height="1" fill="#b8b8b8"/><rect x="8" y="0" width="1" height="1" fill="#b8b8b8"/><rect x="10" y="0" width="1" height="1" fill="#b8b8b8"/><rect x="12" y="0" width="1" height="1" fill="#b8b8b8"/><rect x="14" y="0" width="1" height="1" fill="#b8b8b8"/></svg>
<div class="t " style="left:9.40px;top:475px;font-size:13.8px;line-height:20px;transform:scaleX(0.9662);transform-origin:0.00px 0;">Elements</div>
<svg class="a" style="left:299px;top:478px;" width="11" height="11" viewBox="0 0 11 11"><rect x="0.5" y="0.5" width="10" height="10" rx="2" fill="none" stroke="#6e6e6e"/><rect x="4" y="2.5" width="4.5" height="4" fill="none" stroke="#6e6e6e" stroke-width="0.9"/><rect x="2.5" y="4.5" width="4.5" height="4" fill="#efefef" stroke="#6e6e6e" stroke-width="0.9"/></svg>
<svg class="a" style="left:313px;top:478px;" width="11" height="11" viewBox="0 0 11 11"><rect x="0.5" y="0.5" width="10" height="10" rx="2" fill="none" stroke="#6e6e6e"/><path d="M3 3 L8 8 M8 3 L3 8" stroke="#444" stroke-width="1.8"/></svg>
<div class="a" style="left:5px;top:494px;width:249px;height:23px;background:#fff;border:1px solid #8a8a8a"></div>
<div class="t " style="left:8.60px;top:496px;font-size:13.8px;line-height:20px;transform:scaleX(0.9702);transform-origin:0.00px 0;color:#a0a0a0;">Filter Elements</div>
<svg class="a" style="left:257px;top:497.5px;" width="18" height="16" viewBox="0 0 18 16"><path d="M3.5 1.5 H8 V8.5 H10.5 L5.75 14.5 L1 8.5 H3.5 Z" fill="#f7c436" stroke="#dc8a14" stroke-width="0.8"/><path d="M9.5 2.5 H16.5 M9.5 14 H16.5" stroke="#1a40b0" stroke-width="1.6"/><path d="M11 5.5 H16.5 M11 8.5 H16.5 M11 11.5 H16.5" stroke="#5a80d8" stroke-width="1.2"/></svg>
<svg class="a" style="left:281px;top:497.5px;" width="18" height="16" viewBox="0 0 18 16"><path d="M5.5 1.5 L10.5 8.5 H8 V14.5 H3.5 V8.5 H1 Z" fill="#f7c436" stroke="#dc8a14" stroke-width="0.8"/><path d="M9.5 2.5 H16.5 M9.5 14 H16.5" stroke="#1a40b0" stroke-width="1.6"/><path d="M11 5.5 H16.5 M11 8.5 H16.5 M11 11.5 H16.5" stroke="#5a80d8" stroke-width="1.2"/></svg>
<svg class="a" style="left:306px;top:497.5px;" width="16" height="16" viewBox="0 0 16 16"><path d="M4.5 1.5 H11.5 V6.5 H14.5 L8 13.5 L1.5 6.5 H4.5 Z" fill="#f7c436" stroke="#dc8a14" stroke-width="0.8"/></svg>
<div class="a" style="left:5px;top:523px;width:321px;height:212px;background:#fff;border:1px solid #b9b9b9"></div>
<div class="t " style="left:22.30px;top:524px;font-size:13.8px;line-height:20px;transform:scaleX(1.0089);transform-origin:0.00px 0;">extends Modelica.Icons.Information</div>
<div class="a" style="left:330px;top:81px;width:649px;height:32px;background:linear-gradient(#f9f9f9,#efefef);border:1px solid #a9a9a9;border-bottom:none;border-radius:3px 3px 0 0"></div>
<svg class="a" style="left:339.41px;top:87.14px;" width="23.06" height="18.74" viewBox="0 0 23.06 18.74"><g transform="scale(0.7207207207207208)"><path d="M11 13 L17 17 L14 20 Z" fill="#8ab0e8"/><circle cx="19.2" cy="4.6" r="2.82" fill="#7a9ee6"/><circle cx="19.2" cy="4.6" r="3.21" fill="none" stroke="#7a9ee6" stroke-width="1.41" stroke-dasharray="1.26 1.26"/><circle cx="19.2" cy="4.6" r="1.3" fill="#f4f4f4"/><circle cx="19.2" cy="4.6" r="1.3" fill="#e4e8f4"/><circle cx="8.1" cy="15.8" r="3.73" fill="#2450d0"/><circle cx="8.1" cy="15.8" r="4.24" fill="none" stroke="#2450d0" stroke-width="1.86" stroke-dasharray="1.67 1.67"/><circle cx="8.1" cy="15.8" r="1.3043478260869565" fill="#f4f4f4"/><circle cx="17.5" cy="13.4" r="4.80" fill="#1a3cb0"/><circle cx="17.5" cy="13.4" r="5.47" fill="none" stroke="#1a3cb0" stroke-width="2.40" stroke-dasharray="1.91 1.91"/><circle cx="17.5" cy="13.4" r="2.0869565217391304" fill="#f4f4f4"/><circle cx="17.5" cy="13.4" r="2.09" fill="#d8dcec"/><circle cx="23.2" cy="18.6" r="1.9" fill="none" stroke="#1a2e90" stroke-width="1.72"/></g></svg>
<div class="t " style="left:624.40px;top:88px;font-size:13.8px;line-height:20px;transform:scaleX(0.9836);transform-origin:0.00px 0;">Overview</div>
<svg class="a" style="left:950px;top:91px;" width="13" height="13" viewBox="0 0 13 13"><rect x="0" y="0" width="13" height="13" rx="2" fill="#606060"/><path d="M3.5 3.5 L9.5 9.5 M9.5 3.5 L3.5 9.5" stroke="#fff" stroke-width="1.7"/></svg>
<div class="a" style="left:330px;top:113px;width:649px;height:28px;background:#d5d5d5;border:1px solid #8e8e8e"></div>
<div class="a" style="left:432px;top:114px;width:1px;height:26px;background:#a0a0a0"></div>
<div class="a" style="left:519px;top:114px;width:1px;height:26px;background:#a0a0a0"></div>
<div class="a" style="left:585px;top:114px;width:1px;height:26px;background:#a0a0a0"></div>
<div class="a" style="left:631px;top:114px;width:1px;height:26px;background:#a0a0a0"></div>
<div class="a" style="left:731px;top:114px;width:1px;height:26px;background:#a0a0a0"></div>
<div class="a" style="left:937px;top:114px;width:1px;height:26px;background:#a0a0a0"></div>
<div class="a" style="left:953px;top:114px;width:1px;height:26px;background:#a0a0a0"></div>
<svg class="a" style="left:335px;top:118px;" width="18" height="18" viewBox="0 0 18 18"><path d="M1 9 H17" stroke="#111" stroke-width="2.2"/><path d="M1.5 5.5 V12.5 M16.5 5.5 V12.5" stroke="#111" stroke-width="2"/><rect x="5.5" y="1" width="7" height="15" fill="#2348c0" stroke="#1a3590" stroke-width="0.6"/></svg>
<div class="a" style="left:356px;top:116px;width:24px;height:23px;background:#e6e6e6;border:1px solid #b6b6b6;border-radius:3px"></div>
<svg class="a" style="left:357.41px;top:119.14px;" width="23.06" height="18.74" viewBox="0 0 23.06 18.74"><g transform="scale(0.7207207207207208)"><path d="M11 13 L17 17 L14 20 Z" fill="#8ab0e8"/><circle cx="19.2" cy="4.6" r="2.82" fill="#7a9ee6"/><circle cx="19.2" cy="4.6" r="3.21" fill="none" stroke="#7a9ee6" stroke-width="1.41" stroke-dasharray="1.26 1.26"/><circle cx="19.2" cy="4.6" r="1.3" fill="#e6e6e6"/><circle cx="19.2" cy="4.6" r="1.3" fill="#e4e8f4"/><circle cx="8.1" cy="15.8" r="3.73" fill="#2450d0"/><circle cx="8.1" cy="15.8" r="4.24" fill="none" stroke="#2450d0" stroke-width="1.86" stroke-dasharray="1.67 1.67"/><circle cx="8.1" cy="15.8" r="1.3043478260869565" fill="#e6e6e6"/><circle cx="17.5" cy="13.4" r="4.80" fill="#1a3cb0"/><circle cx="17.5" cy="13.4" r="5.47" fill="none" stroke="#1a3cb0" stroke-width="2.40" stroke-dasharray="1.91 1.91"/><circle cx="17.5" cy="13.4" r="2.0869565217391304" fill="#e6e6e6"/><circle cx="17.5" cy="13.4" r="2.09" fill="#d8dcec"/><circle cx="23.2" cy="18.6" r="1.9" fill="none" stroke="#1a2e90" stroke-width="1.72"/></g></svg>
<svg class="a" style="left:384px;top:119px;" width="16" height="16" viewBox="0 0 16 16"><rect x="0" y="0" width="16" height="16" fill="#2348c0"/><path d="M2 3 H14 M2 6.3 H11 M2 9.6 H14 M2 12.9 H10" stroke="#fff" stroke-width="1.4"/></svg>
<svg class="a" style="left:408px;top:119px;" width="16" height="16" viewBox="0 0 16 16"><circle cx="8" cy="8" r="7.8" fill="#2348c0"/><rect x="6.8" y="6.5" width="2.6" height="6.5" fill="#fff"/><circle cx="8.1" cy="4" r="1.4" fill="#fff"/></svg>
<svg class="a" style="left:440px;top:119px;" width="15" height="15" viewBox="0 0 15 15"><path d="M1 7.5 L7 2 V5 H13 Q14 5 14 6 V9 Q14 10 13 10 H7 V13 Z" fill="#e4e4e4" stroke="#c2c2c2" stroke-width="1" stroke-linejoin="round"/></svg>
<svg class="a" style="left:463px;top:119px;" width="15" height="15" viewBox="0 0 15 15"><path d="M14 7.5 L8 2 V5 H2 Q1 5 1 6 V9 Q1 10 2 10 H8 V13 Z" fill="#e4e4e4" stroke="#c2c2c2" stroke-width="1" stroke-linejoin="round"/></svg>
<svg class="a" style="left:486px;top:119px;" width="17" height="17" viewBox="0 0 17 17"><path d="M2.5 2.5 L14.5 14.5 M14.5 2.5 L2.5 14.5" stroke="#8e8e8e" stroke-width="4.6" stroke-linecap="square"/><path d="M2.5 2.5 L14.5 14.5 M14.5 2.5 L2.5 14.5" stroke="#b0b0b0" stroke-width="2.6" stroke-linecap="square"/></svg>
<div class="t " style="left:525.00px;top:118px;font-size:13.8px;line-height:20px;transform:scaleX(1.0224);transform-origin:0.00px 0;">Writable</div>
<div class="t " style="left:591.40px;top:118px;font-size:13.8px;line-height:20px;transform:scaleX(0.8957);transform-origin:0.00px 0;">Class</div>
<div class="t " style="left:637.20px;top:118px;font-size:13.8px;line-height:20px;transform:scaleX(0.9767);transform-origin:0.00px 0;">Diagram View</div>
<div class="a" style="left:737px;top:118px;width:199px;height:20px;overflow:hidden">
<div class="t " style="left:0.00px;top:0px;font-size:13.8px;line-height:20px;">Pharmacolibrary.UsersGuide.Overview</div>
</div>
<svg class="a" style="left:961px;top:118px;" width="12" height="16" viewBox="0 0 12 16"><path d="M3 7 V4.5 A3 3 0 0 1 9 4.5" fill="none" stroke="#b8b8b8" stroke-width="1.5"/><rect x="1.5" y="7" width="9" height="8" rx="1" fill="#b8b8b8"/></svg>
<div class="a" style="left:330px;top:141px;width:649px;height:265px;background:#f1f1f1;border-left:1px solid #cfcfcf;border-right:1px solid #cfcfcf"></div>
<svg class="a" style="left:331px;top:146px;" width="633" height="245" viewBox="0 0 633 245"><path d="M17.5 0 V245" stroke="#dedede"/><path d="M40.5 0 V245" stroke="#dedede"/><path d="M63.5 0 V245" stroke="#dedede"/><path d="M86.5 0 V245" stroke="#dedede"/><path d="M109.5 0 V245" stroke="#dedede"/><path d="M132.5 0 V245" stroke="#dedede"/><path d="M155.5 0 V245" stroke="#dedede"/><path d="M178.5 0 V245" stroke="#dedede"/><path d="M201.5 0 V245" stroke="#dedede"/><path d="M224.5 0 V245" stroke="#dedede"/><path d="M247.5 0 V245" stroke="#dedede"/><path d="M270.5 0 V245" stroke="#dedede"/><path d="M293.5 0 V245" stroke="#dedede"/><path d="M316.5 0 V245" stroke="#dedede"/><path d="M338.5 0 V245" stroke="#dedede"/><path d="M361.5 0 V245" stroke="#dedede"/><path d="M384.5 0 V245" stroke="#dedede"/><path d="M407.5 0 V245" stroke="#dedede"/><path d="M430.5 0 V245" stroke="#dedede"/><path d="M453.5 0 V245" stroke="#dedede"/><path d="M476.5 0 V245" stroke="#dedede"/><path d="M499.5 0 V245" stroke="#dedede"/><path d="M522.5 0 V245" stroke="#dedede"/><path d="M545.5 0 V245" stroke="#dedede"/><path d="M568.5 0 V245" stroke="#dedede"/><path d="M591.5 0 V245" stroke="#dedede"/><path d="M614.5 0 V245" stroke="#dedede"/><path d="M0 7.5 H633" stroke="#dedede"/><path d="M0 30.5 H633" stroke="#dedede"/><path d="M0 53.5 H633" stroke="#dedede"/><path d="M0 76.5 H633" stroke="#dedede"/><path d="M0 99.5 H633" stroke="#dedede"/><path d="M0 122.5 H633" stroke="#dedede"/><path d="M0 144.5 H633" stroke="#dedede"/><path d="M0 167.5 H633" stroke="#dedede"/><path d="M0 190.5 H633" stroke="#dedede"/><path d="M0 213.5 H633" stroke="#dedede"/><path d="M0 236.5 H633" stroke="#dedede"/><rect x="201" y="7" width="229" height="229" fill="#fff"/><path d="M224.5 7 V236" stroke="#dedede"/><path d="M247.5 7 V236" stroke="#dedede"/><path d="M270.5 7 V236" stroke="#dedede"/><path d="M293.5 7 V236" stroke="#dedede"/><path d="M316.5 7 V236" stroke="#dedede"/><path d="M338.5 7 V236" stroke="#dedede"/><path d="M361.5 7 V236" stroke="#dedede"/><path d="M384.5 7 V236" stroke="#dedede"/><path d="M407.5 7 V236" stroke="#dedede"/><path d="M201 30.5 H430" stroke="#dedede"/><path d="M201 53.5 H430" stroke="#dedede"/><path d="M201 76.5 H430" stroke="#dedede"/><path d="M201 99.5 H430" stroke="#dedede"/><path d="M201 122.5 H430" stroke="#dedede"/><path d="M201 144.5 H430" stroke="#dedede"/><path d="M201 167.5 H430" stroke="#dedede"/><path d="M201 190.5 H430" stroke="#dedede"/><path d="M201 213.5 H430" stroke="#dedede"/><rect x="201.5" y="7.5" width="229" height="229" fill="none" stroke="#b6b6b6"/><path d="M316.5 0 V245 M0 122.5 H633" stroke="#b6b6b6"/></svg>
<div class="a" style="left:330px;top:145px;width:649px;height:1px;background:#ababab"></div>
<div class="a" style="left:330px;top:145px;width:1px;height:261px;background:#ababab"></div>
<div class="a" style="left:964px;top:145px;width:15px;height:247px;background:#e3e3e3;border:1px solid #a9a9a9"></div>
<div class="a" style="left:964px;top:191px;width:15px;height:156px;background:linear-gradient(90deg,#f6f6f6,#fdfdfd 45%,#f3f3f3);border:1px solid #a9a9a9"></div>
<div class="a" style="left:964px;top:145px;width:15px;height:15px;background:linear-gradient(#fefefe,#f3f3f3);border:1px solid #a9a9a9"></div>
<svg class="a" style="left:967px;top:150px;" width="8" height="4" viewBox="0 0 8 4"><path d="M0 4 L4 0 L8 4 Z" fill="#3f3f3f"/></svg>
<div class="a" style="left:964px;top:377px;width:15px;height:15px;background:linear-gradient(#fefefe,#f3f3f3);border:1px solid #a9a9a9"></div>
<svg class="a" style="left:967px;top:382px;" width="8" height="4" viewBox="0 0 8 4"><path d="M0 0 L4 4 L8 0 Z" fill="#3f3f3f"/></svg>
<div class="a" style="left:330px;top:391px;width:635px;height:15px;background:#e3e3e3;border:1px solid #a9a9a9"></div>
<div class="a" style="left:344px;top:391px;width:607px;height:15px;background:linear-gradient(#f6f6f6,#fdfdfd 45%,#f1f1f1);border:1px solid #a9a9a9"></div>
<div class="a" style="left:330px;top:391px;width:15px;height:15px;background:linear-gradient(#fefefe,#f3f3f3);border:1px solid #a9a9a9"></div>
<svg class="a" style="left:335px;top:394px;" width="5" height="8" viewBox="0 0 5 8"><path d="M4.5 0 L0.5 4 L4.5 8 Z" fill="#3f3f3f"/></svg>
<div class="a" style="left:950px;top:391px;width:15px;height:15px;background:linear-gradient(#fefefe,#f3f3f3);border:1px solid #a9a9a9"></div>
<svg class="a" style="left:955px;top:394px;" width="5" height="8" viewBox="0 0 5 8"><path d="M0.5 0 L4.5 4 L0.5 8 Z" fill="#3f3f3f"/></svg>
<div class="a" style="left:964px;top:391px;width:15px;height:15px;background:#ececec;border:1px solid #a9a9a9"></div>
<svg class="a" style="left:648px;top:407px;" width="16" height="1" viewBox="0 0 16 1"><rect x="0" y="0" width="1" height="1" fill="#b8b8b8"/><rect x="2" y="0" width="1" height="1" fill="#b8b8b8"/><rect x="4" y="0" width="1" height="1" fill="#b8b8b8"/><rect x="6" y="0" width="1" height="1" fill="#b8b8b8"/><rect x="8" y="0" width="1" height="1" fill="#b8b8b8"/><rect x="10" y="0" width="1" height="1" fill="#b8b8b8"/><rect x="12" y="0" width="1" height="1" fill="#b8b8b8"/><rect x="14" y="0" width="1" height="1" fill="#b8b8b8"/></svg>
<div class="t " style="left:334.50px;top:411px;font-size:13.8px;line-height:20px;transform:scaleX(0.9471);transform-origin:0.00px 0;">Messages</div>
<svg class="a" style="left:952px;top:414px;" width="11" height="11" viewBox="0 0 11 11"><rect x="0.5" y="0.5" width="10" height="10" rx="2" fill="none" stroke="#6e6e6e"/><rect x="4" y="2.5" width="4.5" height="4" fill="none" stroke="#6e6e6e" stroke-width="0.9"/><rect x="2.5" y="4.5" width="4.5" height="4" fill="#efefef" stroke="#6e6e6e" stroke-width="0.9"/></svg>
<svg class="a" style="left:966px;top:414px;" width="11" height="11" viewBox="0 0 11 11"><rect x="0.5" y="0.5" width="10" height="10" rx="2" fill="none" stroke="#6e6e6e"/><path d="M3 3 L8 8 M8 3 L3 8" stroke="#444" stroke-width="1.8"/></svg>
<div class="a" style="left:331px;top:460px;width:648px;height:1px;background:#b8b8b8"></div>
<div class="a" style="left:331px;top:461px;width:648px;height:1px;background:#fafafa"></div>
<div class="a" style="left:330px;top:432px;width:40px;height:29px;background:linear-gradient(#ececec,#e2e2e2);border:1px solid #c0c0c0;border-radius:3px 3px 0 0"></div>
<div class="t " style="left:342.40px;top:438px;font-size:13.8px;line-height:20px;transform:scaleX(0.9466);transform-origin:0.00px 0;">All</div>
<div class="a" style="left:369px;top:432px;width:103px;height:29px;background:linear-gradient(#ececec,#e2e2e2);border:1px solid #c0c0c0;border-radius:3px 3px 0 0"></div>
<div class="t " style="left:381.50px;top:438px;font-size:13.8px;line-height:20px;transform:scaleX(1.0247);transform-origin:0.00px 0;">Notifications</div>
<div class="a" style="left:471px;top:432px;width:84px;height:29px;background:linear-gradient(#ececec,#e2e2e2);border:1px solid #c0c0c0;border-radius:3px 3px 0 0"></div>
<div class="t " style="left:483.00px;top:438px;font-size:13.8px;line-height:20px;transform:scaleX(1.0077);transform-origin:0.00px 0;">Warnings</div>
<div class="a" style="left:554px;top:432px;width:63px;height:29px;background:linear-gradient(#ececec,#e2e2e2);border:1px solid #c0c0c0;border-radius:3px 3px 0 0"></div>
<div class="t " style="left:566.50px;top:438px;font-size:13.8px;line-height:20px;transform:scaleX(0.9857);transform-origin:0.00px 0;">Errors</div>
<div class="a" style="left:616px;top:430px;width:116px;height:31px;background:linear-gradient(#fefefe,#f9f9f9);border:1px solid #c0c0c0;border-bottom:none;border-radius:3px 3px 0 0"></div>
<div class="t " style="left:628.40px;top:437px;font-size:13.8px;line-height:20px;transform:scaleX(0.9767);transform-origin:0.00px 0;">Enoxaparin</div>
<svg class="a" style="left:704px;top:440px;" width="12" height="12" viewBox="0 0 12 12"><rect x="0" y="0" width="12" height="12" rx="2" fill="#606060"/><path d="M3.2 3.2 L8.8 8.8 M8.8 3.2 L3.2 8.8" stroke="#fff" stroke-width="1.6"/></svg>
<div class="t " style="left:335.40px;top:471px;font-size:13.8px;line-height:20px;transform:scaleX(0.9828);transform-origin:0.00px 0;">Simulation of Pharma…Enoxaparin finished.</div>
<div class="a" style="left:611px;top:467px;width:91px;height:26px;background:repeating-linear-gradient(135deg,rgba(255,255,255,0.035) 0 1px,rgba(0,0,0,0.025) 1px 2px),linear-gradient(#43a0e8,#2e88d6);border:1px solid #2a6cb0;border-radius:3px"></div>
<div class="t " style="left:640.50px;top:471px;font-size:13.8px;line-height:20px;transform:scaleX(0.9086);transform-origin:0.00px 0;color:#e8f2fc;">100%</div>
<div class="a" style="left:708px;top:467px;width:117px;height:26px;background:#efefef;border:1px solid #cfcfcf;border-radius:3px"></div>
<div class="t " style="left:712.80px;top:471px;font-size:13.8px;line-height:20px;transform:scaleX(0.9674);transform-origin:0.00px 0;color:#b4b4b4;">Cancel Simulation</div>
<div class="a" style="left:831px;top:468px;width:24px;height:23px;background:linear-gradient(#fdfdfd,#f1f1f1);border:1px solid #b4b4b4;border-radius:3px"></div>
<svg class="a" style="left:834px;top:471px;" width="18" height="18" viewBox="0 0 18 18"><path d="M11.5 2 L15 3.5 L14 7 L11 5 Z M2 13 L4 11 L7 14 L5 16 Z" fill="#fff" stroke="#777" stroke-width="0.6"/><circle cx="7.4" cy="6.7" r="6" fill="#3f7ff0" stroke="#1a3a80" stroke-width="0.4"/><circle cx="13.5" cy="12" r="2.2" fill="#111"/><path d="M14.5 13 L16.5 15.5" stroke="#555" stroke-width="0.8"/><circle cx="5" cy="3.5" r="1.2" fill="#111"/><circle cx="8.5" cy="3.5" r="0.9" fill="#111"/><circle cx="3" cy="7" r="0.9" fill="#111"/><circle cx="10.5" cy="7" r="1.5" fill="#111"/><circle cx="6" cy="9.5" r="1.4" fill="#111"/><circle cx="9" cy="10.5" r="0.8" fill="#111"/></svg>
<div class="a" style="left:861px;top:467px;width:113px;height:26px;background:linear-gradient(#fbfbfb,#ececec);border:1px solid #b8b8b8;border-radius:3px"></div>
<div class="t " style="left:865.60px;top:471px;font-size:13.8px;line-height:20px;transform:scaleX(0.9878);transform-origin:0.00px 0;">Open Output File</div>
<div class="a" style="left:335px;top:527px;width:639px;height:1px;background:#b8b8b8"></div>
<div class="a" style="left:335px;top:501px;width:100px;height:27px;background:linear-gradient(#ececec,#e2e2e2);border:1px solid #c0c0c0;border-radius:3px 3px 0 0"></div>
<div class="t " style="left:347.70px;top:506px;font-size:13.8px;line-height:20px;transform:scaleX(1.0060);transform-origin:0.00px 0;">Compilation</div>
<div class="a" style="left:435px;top:499px;width:67px;height:29px;background:linear-gradient(#fefefe,#f9f9f9);border:1px solid #c0c0c0;border-bottom:none;border-radius:3px 3px 0 0"></div>
<div class="t " style="left:446.20px;top:506px;font-size:13.8px;line-height:20px;transform:scaleX(1.0459);transform-origin:0.00px 0;">Output</div>
<div class="a" style="left:335px;top:529px;width:639px;height:201px;background:#fff;border:1px solid #a9a9a9"></div>
<div class="a" style="left:959px;top:529px;width:15px;height:201px;background:#e3e3e3;border:1px solid #a9a9a9"></div>
<div class="a" style="left:959px;top:586px;width:15px;height:130px;background:linear-gradient(90deg,#f6f6f6,#fdfdfd 45%,#f3f3f3);border:1px solid #a9a9a9"></div>
<div class="a" style="left:959px;top:529px;width:15px;height:15px;background:linear-gradient(#fefefe,#f3f3f3);border:1px solid #a9a9a9"></div>
<svg class="a" style="left:962px;top:534px;" width="8" height="4" viewBox="0 0 8 4"><path d="M0 4 L4 0 L8 4 Z" fill="#3f3f3f"/></svg>
<div class="a" style="left:959px;top:715px;width:15px;height:15px;background:linear-gradient(#fefefe,#f3f3f3);border:1px solid #a9a9a9"></div>
<svg class="a" style="left:962px;top:720px;" width="8" height="4" viewBox="0 0 8 4"><path d="M0 0 L4 4 L8 0 Z" fill="#3f3f3f"/></svg>
<div class="t  m" style="left:351.00px;top:532px;font-size:13px;line-height:20px;">The initialization finished successfully without homotopy method.</div>
<svg class="a" style="left:340px;top:557px;" width="5" height="8" viewBox="0 0 5 8"><path d="M0 0 V7 L4 3.5 Z" fill="#555"/></svg>
<div class="t  m" style="left:351.00px;top:553px;font-size:13px;line-height:20px;">### STATISTICS ###</div>
<div class="t  m" style="left:351.00px;top:574px;font-size:13px;line-height:20px;">The simulation finished successfully.</div>
<svg class="a" style="left:328px;top:401px;" width="1" height="17" viewBox="0 0 1 17"><rect x="0" y="0" width="1" height="1" fill="#b0b0b0"/><rect x="0" y="3" width="1" height="1" fill="#b0b0b0"/><rect x="0" y="6" width="1" height="1" fill="#b0b0b0"/><rect x="0" y="9" width="1" height="1" fill="#b0b0b0"/><rect x="0" y="12" width="1" height="1" fill="#b0b0b0"/><rect x="0" y="15" width="1" height="1" fill="#b0b0b0"/></svg>
<svg class="a" style="left:981px;top:401px;" width="1" height="17" viewBox="0 0 1 17"><rect x="0" y="0" width="1" height="1" fill="#b0b0b0"/><rect x="0" y="3" width="1" height="1" fill="#b0b0b0"/><rect x="0" y="6" width="1" height="1" fill="#b0b0b0"/><rect x="0" y="9" width="1" height="1" fill="#b0b0b0"/><rect x="0" y="12" width="1" height="1" fill="#b0b0b0"/><rect x="0" y="15" width="1" height="1" fill="#b0b0b0"/></svg>
<div class="t " style="left:987.10px;top:82px;font-size:13.8px;line-height:20px;transform:scaleX(1.0183);transform-origin:0.00px 0;">Documentation</div>
<svg class="a" style="left:1190px;top:85px;" width="11" height="11" viewBox="0 0 11 11"><rect x="0.5" y="0.5" width="10" height="10" rx="2" fill="none" stroke="#6e6e6e"/><rect x="4" y="2.5" width="4.5" height="4" fill="none" stroke="#6e6e6e" stroke-width="0.9"/><rect x="2.5" y="4.5" width="4.5" height="4" fill="#efefef" stroke="#6e6e6e" stroke-width="0.9"/></svg>
<svg class="a" style="left:1204px;top:85px;" width="11" height="11" viewBox="0 0 11 11"><rect x="0.5" y="0.5" width="10" height="10" rx="2" fill="none" stroke="#6e6e6e"/><path d="M3 3 L8 8 M8 3 L3 8" stroke="#444" stroke-width="1.8"/></svg>
<svg class="a" style="left:992px;top:108px;" width="15" height="15" viewBox="0 0 15 15"><path d="M1 7.5 L7 1.5 V4.5 H12 Q14 4.5 14 7 V8 Q14 10.5 12 10.5 H7 V13.5 Z" fill="#f7c436" stroke="#dc8a14" stroke-width="0.9"/></svg>
<svg class="a" style="left:1017px;top:108px;" width="15" height="15" viewBox="0 0 15 15"><path d="M14 7.5 L8 1.5 V4.5 H3 Q1 4.5 1 7 V8 Q1 10.5 3 10.5 H8 V13.5 Z" fill="#dedede" stroke="#c8c8c8" stroke-width="0.9"/></svg>
<div class="a" style="left:1040px;top:108px;width:1px;height:15px;background:#d0d0d0"></div>
<svg class="a" style="left:1047px;top:107px;" width="18" height="18" viewBox="0 0 18 18"><path d="M1.5 4.5 L4.5 1.5 H15.5 V16.5 H1.5 Z" fill="#fbfbfb" stroke="#8a8a8a" stroke-width="0.9"/><path d="M6.5 10.5 L13 3.5 L15.5 6 L9 13 L6 13.5 Z" fill="#3f7be0" stroke="#1e3f90" stroke-width="0.7"/><text x="8.7" y="16.3" font-size="7.6" fill="#111" text-anchor="middle" font-family="Liberation Sans" font-weight="bold" letter-spacing="-0.3">info</text></svg>
<svg class="a" style="left:1072px;top:107px;" width="18" height="18" viewBox="0 0 18 18"><path d="M1.5 4.5 L4.5 1.5 H15.5 V16.5 H1.5 Z" fill="#fbfbfb" stroke="#8a8a8a" stroke-width="0.9"/><path d="M6.5 10.5 L13 3.5 L15.5 6 L9 13 L6 13.5 Z" fill="#3f7be0" stroke="#1e3f90" stroke-width="0.7"/><text x="8.7" y="16.3" font-size="7.6" fill="#111" text-anchor="middle" font-family="Liberation Sans" font-weight="bold" letter-spacing="-0.2">rev</text></svg>
<svg class="a" style="left:1097px;top:107px;" width="18" height="18" viewBox="0 0 18 18"><path d="M1.5 4.5 L4.5 1.5 H15.5 V16.5 H1.5 Z" fill="#fbfbfb" stroke="#8a8a8a" stroke-width="0.9"/><path d="M6.5 10.5 L13 3.5 L15.5 6 L9 13 L6 13.5 Z" fill="#3f7be0" stroke="#1e3f90" stroke-width="0.7"/><text x="8.7" y="16.3" font-size="5.6" fill="#111" text-anchor="middle" font-family="Liberation Sans" font-weight="bold" letter-spacing="-0.35">header</text></svg>
<div class="a" style="left:1122px;top:108px;width:1px;height:15px;background:#d0d0d0"></div>
<svg class="a" style="left:1130px;top:108px;" width="16" height="16" viewBox="0 0 16 16"><rect x="0.5" y="0.5" width="15" height="15" rx="2" fill="#b5b5b5"/><rect x="3.5" y="1" width="9" height="5" fill="#eaeaea"/><rect x="3" y="9" width="10" height="6" fill="#d5d5d5"/></svg>
<svg class="a" style="left:1154px;top:107px;" width="18" height="17" viewBox="0 0 18 17"><path d="M2.5 2.5 L15.5 14.5 M15.5 2.5 L2.5 14.5" stroke="#8c8c8c" stroke-width="4.4" stroke-linecap="square"/><path d="M2.5 2.5 L15.5 14.5 M15.5 2.5 L2.5 14.5" stroke="#b4b4b4" stroke-width="2.6" stroke-linecap="square"/></svg>
<div class="a" style="left:983px;top:132px;width:234px;height:603px;background:#fff;border:1px solid #a9a9a9"></div>
<div class="a" style="left:984px;top:133px;width:219px;height:587px;overflow:hidden">
<div class="t  m" style="left:8.00px;top:10px;font-size:18px;line-height:20px;color:#111;font-weight:bold;">Pharmacolibrary.UsersGuide</div>
<div class="t  m" style="left:8.00px;top:44px;font-size:12px;line-height:20px;color:#111;font-weight:bold;"><span style="text-decoration:underline;text-underline-offset:1px">Information</span></div>
<div class="t  m" style="left:8.00px;top:71px;font-size:12px;line-height:20px;color:#111;font-weight:bold;">Basic Information</div>
<div class="t  m" style="left:8.00px;top:101px;font-size:12px;line-height:20px;color:#111;"><b>Pharmacolibrary</b> is a</div>
<div class="t  m" style="left:8.00px;top:116px;font-size:12px;line-height:20px;color:#111;">reusable Modelica library</div>
<div class="t  m" style="left:8.00px;top:131px;font-size:12px;line-height:20px;color:#111;">unifying pharmacokinetic</div>
<div class="t  m" style="left:8.00px;top:146px;font-size:12px;line-height:20px;color:#111;">(PK), pharmacodynamic (PD),</div>
<div class="t  m" style="left:8.00px;top:161px;font-size:12px;line-height:20px;color:#111;">toxicokinetic (TK),</div>
<div class="t  m" style="left:8.00px;top:176px;font-size:12px;line-height:20px;color:#111;">toxicodynamic (TD), and</div>
<div class="t  m" style="left:8.00px;top:191px;font-size:12px;line-height:20px;color:#111;">pharmacogenomic (PGx)</div>
<div class="t  m" style="left:8.00px;top:206px;font-size:12px;line-height:20px;color:#111;">constructs with</div>
<div class="t  m" style="left:8.00px;top:221px;font-size:12px;line-height:20px;color:#111;">standardized</div>
<div class="t  m" style="left:8.00px;top:236px;font-size:12px;line-height:20px;color:#111;">pharmacological</div>
<div class="t  m" style="left:8.00px;top:251px;font-size:12px;line-height:20px;color:#111;">terminology, units, and</div>
<div class="t  m" style="left:8.00px;top:266px;font-size:12px;line-height:20px;color:#111;">acausal connectors.</div>
<div class="t  m" style="left:8.00px;top:281px;font-size:12px;line-height:20px;color:#111;">The following acausal</div>
<div class="t  m" style="left:8.00px;top:296px;font-size:12px;line-height:20px;color:#111;">connectors are available</div>
<div class="t  m" style="left:8.00px;top:311px;font-size:12px;line-height:20px;color:#111;">and reused in library:</div>
<div class="a" style="left:9px;top:328px;width:300px;height:148px;border:1px solid #333"></div>
<div class="a" style="left:9px;top:362px;width:300px;height:1px;background:#333"></div>
<div class="a" style="left:9px;top:426px;width:300px;height:1px;background:#333"></div>
<div class="a" style="left:107px;top:328px;width:1px;height:148px;background:#333"></div>
<div class="a" style="left:205px;top:328px;width:1px;height:148px;background:#333"></div>
<div class="t  m" style="left:11.00px;top:337px;font-size:12px;line-height:20px;color:#111;font-weight:bold;">domain</div>
<div class="t  m" style="left:109.00px;top:329px;font-size:12px;line-height:20px;color:#111;font-weight:bold;">potential</div>
<div class="t  m" style="left:109.00px;top:344px;font-size:12px;line-height:20px;color:#111;font-weight:bold;">variables</div>
<div class="t  m" style="left:207.00px;top:329px;font-size:12px;line-height:20px;color:#111;font-weight:bold;">flow</div>
<div class="t  m" style="left:207.00px;top:344px;font-size:12px;line-height:20px;color:#111;font-weight:bold;">variables</div>
<div class="t  m" style="left:11.00px;top:377px;font-size:12px;line-height:20px;color:#111;font-weight:bold;">chemical</div>
<div class="t  m" style="left:11.00px;top:392px;font-size:12px;line-height:20px;color:#111;font-weight:bold;">concentration</div>
<div class="t  m" style="left:109.00px;top:377px;font-size:12px;line-height:20px;color:#111;">mass</div>
<div class="t  m" style="left:109.00px;top:392px;font-size:12px;line-height:20px;color:#111;">concentration</div>
<div class="t  m" style="left:207.00px;top:377px;font-size:12px;line-height:20px;color:#111;">mass</div>
<div class="t  m" style="left:207.00px;top:392px;font-size:12px;line-height:20px;color:#111;">rate</div>
<div class="t  m" style="left:11.00px;top:433px;font-size:12px;line-height:20px;color:#111;font-weight:bold;">volumetric</div>
<div class="t  m" style="left:11.00px;top:448px;font-size:12px;line-height:20px;color:#111;font-weight:bold;">flow</div>
<div class="t  m" style="left:109.00px;top:441px;font-size:12px;line-height:20px;color:#111;">pressure</div>
<div class="t  m" style="left:207.00px;top:433px;font-size:12px;line-height:20px;color:#111;">volume</div>
<div class="t  m" style="left:207.00px;top:448px;font-size:12px;line-height:20px;color:#111;">flow</div>
<div class="t  m" style="left:8.00px;top:505px;font-size:12px;line-height:20px;color:#111;">Pharmacolibrary focuses</div>
<div class="t  m" style="left:8.00px;top:520px;font-size:12px;line-height:20px;color:#111;">it's components into three</div>
<div class="t  m" style="left:8.00px;top:535px;font-size:12px;line-height:20px;color:#111;">main pharmacological</div>
<div class="t  m" style="left:8.00px;top:550px;font-size:12px;line-height:20px;color:#111;">phenomena PK,PD,PGx. See</div>
<div class="t  m" style="left:8.00px;top:565px;font-size:12px;line-height:20px;color:#111;"><span style="color:#0000ee;text-decoration:underline">Pharmacolibrary.Examples</span></div>
<div class="t  m" style="left:8.00px;top:580px;font-size:12px;line-height:20px;color:#111;">for complete PK,PD,PGx</div>
</div>
<div class="a" style="left:1202px;top:132px;width:15px;height:589px;background:#e3e3e3;border:1px solid #a9a9a9"></div>
<div class="a" style="left:1202px;top:146px;width:15px;height:175px;background:linear-gradient(90deg,#f6f6f6,#fdfdfd 45%,#f3f3f3);border:1px solid #a9a9a9"></div>
<div class="a" style="left:1202px;top:132px;width:15px;height:15px;background:linear-gradient(#fefefe,#f3f3f3);border:1px solid #a9a9a9"></div>
<svg class="a" style="left:1205px;top:137px;" width="8" height="4" viewBox="0 0 8 4"><path d="M0 4 L4 0 L8 4 Z" fill="#3f3f3f"/></svg>
<div class="a" style="left:1202px;top:706px;width:15px;height:15px;background:linear-gradient(#fefefe,#f3f3f3);border:1px solid #a9a9a9"></div>
<svg class="a" style="left:1205px;top:711px;" width="8" height="4" viewBox="0 0 8 4"><path d="M0 0 L4 4 L8 0 Z" fill="#3f3f3f"/></svg>
<div class="a" style="left:983px;top:720px;width:220px;height:15px;background:#e3e3e3;border:1px solid #a9a9a9"></div>
<div class="a" style="left:997px;top:720px;width:56px;height:15px;background:linear-gradient(#f6f6f6,#fdfdfd 45%,#f1f1f1);border:1px solid #a9a9a9"></div>
<div class="a" style="left:983px;top:720px;width:15px;height:15px;background:linear-gradient(#fefefe,#f3f3f3);border:1px solid #a9a9a9"></div>
<svg class="a" style="left:988px;top:723px;" width="5" height="8" viewBox="0 0 5 8"><path d="M4.5 0 L0.5 4 L4.5 8 Z" fill="#3f3f3f"/></svg>
<div class="a" style="left:1188px;top:720px;width:15px;height:15px;background:linear-gradient(#fefefe,#f3f3f3);border:1px solid #a9a9a9"></div>
<svg class="a" style="left:1193px;top:723px;" width="5" height="8" viewBox="0 0 5 8"><path d="M0.5 0 L4.5 4 L0.5 8 Z" fill="#3f3f3f"/></svg>
<div class="a" style="left:1202px;top:720px;width:15px;height:15px;background:#ececec;border:1px solid #a9a9a9"></div>
<div class="t " style="left:702.40px;top:744px;font-size:13.8px;line-height:20px;transform:scaleX(0.9269);transform-origin:0.00px 0;">X: -112, Y: 85</div>
<div class="a" style="left:785px;top:739px;width:102px;height:26px;background:linear-gradient(#e2e2e2,#dcdcdc);border:1px solid #c0c0c0;border-radius:0 0 3px 3px"></div>

<div class="t " style="left:817.00px;top:744px;font-size:13.8px;line-height:20px;transform:scaleX(0.9813);transform-origin:0.00px 0;">Welcome</div>
<svg class="a" style="left:797px;top:743px;" width="16" height="16" viewBox="0 0 16 16"><path d="M1 9 C0 3 3 0.5 6 0.5 C9 0.5 10 3 9.8 6.5 L14.5 2.5 L15.5 4 L10 9 V11.5 H15 C16 12.5 16 15 15 15.5 H3 C1.5 15 1.2 12 1 9 Z" fill="#4a4a4a" stroke="#2e2e2e" stroke-width="0.6"/><path d="M3.5 3.5 H6.5 M3.5 6 H6" stroke="#bdbdbd" stroke-width="1"/></svg>
<div class="a" style="left:887px;top:738px;width:101px;height:29px;background:linear-gradient(#fbfbfb,#f6f6f6);border:1px solid #c0c0c0;border-top:none;border-radius:0 0 3px 3px"></div>

<div class="t " style="left:917.90px;top:744px;font-size:13.8px;line-height:20px;transform:scaleX(1.0245);transform-origin:0.00px 0;">Modeling</div>
<svg class="a" style="left:895.41px;top:743.14px;" width="23.06" height="18.74" viewBox="0 0 23.06 18.74"><g transform="scale(0.7207207207207208)"><path d="M11 13 L17 17 L14 20 Z" fill="#8ab0e8"/><circle cx="19.2" cy="4.6" r="2.82" fill="#7a9ee6"/><circle cx="19.2" cy="4.6" r="3.21" fill="none" stroke="#7a9ee6" stroke-width="1.41" stroke-dasharray="1.26 1.26"/><circle cx="19.2" cy="4.6" r="1.3" fill="#f8f8f8"/><circle cx="19.2" cy="4.6" r="1.3" fill="#e4e8f4"/><circle cx="8.1" cy="15.8" r="3.73" fill="#2450d0"/><circle cx="8.1" cy="15.8" r="4.24" fill="none" stroke="#2450d0" stroke-width="1.86" stroke-dasharray="1.67 1.67"/><circle cx="8.1" cy="15.8" r="1.3043478260869565" fill="#f8f8f8"/><circle cx="17.5" cy="13.4" r="4.80" fill="#1a3cb0"/><circle cx="17.5" cy="13.4" r="5.47" fill="none" stroke="#1a3cb0" stroke-width="2.40" stroke-dasharray="1.91 1.91"/><circle cx="17.5" cy="13.4" r="2.0869565217391304" fill="#f8f8f8"/><circle cx="17.5" cy="13.4" r="2.09" fill="#d8dcec"/><circle cx="23.2" cy="18.6" r="1.9" fill="none" stroke="#1a2e90" stroke-width="1.72"/></g></svg>
<div class="a" style="left:988px;top:739px;width:92px;height:26px;background:linear-gradient(#e2e2e2,#dcdcdc);border:1px solid #c0c0c0;border-radius:0 0 3px 3px"></div>

<div class="t " style="left:1020.00px;top:744px;font-size:13.8px;line-height:20px;transform:scaleX(1.0169);transform-origin:0.00px 0;">Plotting</div>
<svg class="a" style="left:1000px;top:743px;" width="16" height="16" viewBox="0 0 16 16"><rect x="0.5" y="0.5" width="15" height="15" rx="3" fill="#2f6ae0" stroke="#2250b0" stroke-width="0.8"/><path d="M2 4.5 H14 M2 7 H14" stroke="#7fa8f0" stroke-width="1" stroke-dasharray="1 0.8"/><path d="M2 9.5 C5 6 8 11 14 8" stroke="#cfe0ff" fill="none" stroke-width="0.9"/><rect x="2" y="11" width="12" height="3" fill="#1e48a8"/><text x="8" y="13.7" font-size="3.2" fill="#fff" text-anchor="middle" font-family="Liberation Sans" font-weight="bold">OMPlot</text></svg>
<div class="a" style="left:1080px;top:739px;width:113px;height:26px;background:linear-gradient(#e2e2e2,#dcdcdc);border:1px solid #c0c0c0;border-radius:0 0 3px 3px"></div>

<div class="t " style="left:1112.00px;top:744px;font-size:13.8px;line-height:20px;transform:scaleX(1.0181);transform-origin:0.00px 0;">Debugging</div>
<svg class="a" style="left:1092px;top:743px;" width="16" height="16" viewBox="0 0 16 16"><path d="M2 2 L6 1 L7 5 L3 6Z M10 12 L14 11 L15 15 L11 15Z" fill="#fff" stroke="#555" stroke-width="0.6"/><circle cx="7.5" cy="9" r="6" fill="#e02020" stroke="#6a1010" stroke-width="0.6"/><circle cx="13" cy="3" r="2.4" fill="#111"/><circle cx="5" cy="7" r="1.2" fill="#111"/><circle cx="9" cy="6" r="1.1" fill="#111"/><circle cx="4.5" cy="11" r="1.1" fill="#111"/><circle cx="8" cy="12.5" r="1.1" fill="#111"/><circle cx="10.5" cy="9.5" r="1.1" fill="#111"/></svg>
<svg class="a" style="left:1205px;top:758px;" width="11" height="11" viewBox="0 0 11 11"><rect x="9" y="0" width="1.4" height="1.4" fill="#bdbdbd"/><rect x="6" y="3" width="1.4" height="1.4" fill="#bdbdbd"/><rect x="9" y="3" width="1.4" height="1.4" fill="#bdbdbd"/><rect x="3" y="6" width="1.4" height="1.4" fill="#bdbdbd"/><rect x="6" y="6" width="1.4" height="1.4" fill="#bdbdbd"/><rect x="9" y="6" width="1.4" height="1.4" fill="#bdbdbd"/><rect x="0" y="9" width="1.4" height="1.4" fill="#bdbdbd"/><rect x="3" y="9" width="1.4" height="1.4" fill="#bdbdbd"/><rect x="6" y="9" width="1.4" height="1.4" fill="#bdbdbd"/><rect x="9" y="9" width="1.4" height="1.4" fill="#bdbdbd"/></svg>
<div class="a" style="left:1218px;top:26px;width:1px;height:745px;background:#d6d6d6"></div>
</body></html>
